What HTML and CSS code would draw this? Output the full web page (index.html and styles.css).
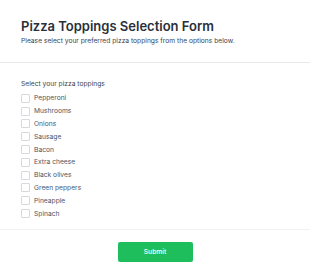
FILE: index.html
```html
<!DOCTYPE html>
<html lang="en">
<head>
    <meta charset="UTF-8">
    <meta name="viewport" content="width=device-width, initial-scale=1.0">
    <title>Pizza Toppings Selection Form</title>
    <link rel="stylesheet" href="styles.css">
</head>
<body>
    <form class="form">
        <div class="form-header">
            <h1>Pizza Toppings Selection Form</h1>
            <p>Please select your preferred pizza toppings from the options below.</p>
        </div>
        <div class="form-body">
            <div class="group-label">Select your pizza toppings</div>
            <ul class="options">
                <li><label><input type="checkbox"><span class="box"></span>Pepperoni</label></li>
                <li><label><input type="checkbox"><span class="box"></span>Mushrooms</label></li>
                <li><label><input type="checkbox"><span class="box"></span>Onions</label></li>
                <li><label><input type="checkbox"><span class="box"></span>Sausage</label></li>
                <li><label><input type="checkbox"><span class="box"></span>Bacon</label></li>
                <li><label><input type="checkbox"><span class="box"></span>Extra cheese</label></li>
                <li><label><input type="checkbox"><span class="box"></span>Black olives</label></li>
                <li><label><input type="checkbox"><span class="box"></span>Green peppers</label></li>
                <li><label><input type="checkbox"><span class="box"></span>Pineapple</label></li>
                <li><label><input type="checkbox"><span class="box"></span>Spinach</label></li>
            </ul>
        </div>
        <div class="form-footer">
            <button type="button" class="submit">Submit</button>
        </div>
    </form>
</body>
</html>
```

FILE: styles.css
```css
/* General styles */
body {
    font-family: Inter, "Noto Sans", sans-serif;
    margin: 0;
    padding: 0;
    background-color: #fff;
    color: #1f2937;
}
.form-header {
    padding: 18px 21px 17px;
    border-bottom: 1px solid #e8e9eb;
}
.form-header h1 {
    margin: 0;
    font-size: 13px;
    font-weight: 600;
    color: #2a2f3a;
}
.form-header p {
    margin: 3px 0 0;
    font-size: 6.7px;
    color: #3d4451;
}
/* Options */
.form-body {
    padding: 17px 21px 9px;
    border-bottom: 1px solid #f1f2f4;
}
.group-label {
    font-size: 6.7px;
    color: #3d4451;
    margin-bottom: 4px;
}
.options {
    list-style: none;
    margin: 0;
    padding: 0;
}
.options li {
    height: 12.8px;
}
.options label {
    display: flex;
    align-items: center;
    font-size: 6.7px;
    color: #4b5563;
    height: 100%;
}
.options input {
    display: none;
}
.options .box {
    width: 7px;
    height: 7px;
    border: 1px solid #d6d9de;
    border-radius: 1px;
    margin-right: 4px;
    background: #fff;
}
/* Footer */
.form-footer {
    display: flex;
    justify-content: center;
    padding: 12px 0;
}
.submit {
    background-color: #1ebe5d;
    color: white;
    border: none;
    border-radius: 2px;
    width: 75px;
    height: 20px;
    font-family: Inter, "Noto Sans", sans-serif;
    font-size: 6.7px;
    font-weight: 500;
    cursor: pointer;
}
```
